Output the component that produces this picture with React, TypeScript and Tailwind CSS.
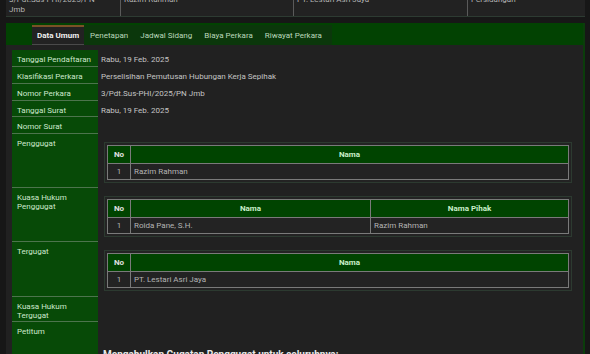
import React from "react";

type Col = { title: string; w?: string };

function MiniTable({ cols, row }: { cols: Col[]; row: string[] }) {
  return (
    <div className="ml-[6px] mr-[11px] border border-[#2c3a30] bg-[#232323] p-[2px]">
      <div className="border border-[#7a7a7a]">
        <div className="flex h-[17px] bg-[#004400] font-bold">
          <div className="w-[23px] shrink-0 border-r border-[#7a7a7a] flex items-center justify-center text-[#e0e0e0]">
            No
          </div>
          {cols.map((c, i) => (
            <div
              key={i}
              className={`${c.w ?? "flex-1"} flex items-center justify-center text-[#c9efc9] ${
                i < cols.length - 1 ? "border-r border-[#7a7a7a]" : ""
              }`}
            >
              {c.title}
            </div>
          ))}
        </div>
        <div className="flex h-[16px] border-t border-[#7a7a7a] text-[#b4b4b4]">
          <div className="w-[23px] shrink-0 border-r border-[#7a7a7a] flex items-center justify-center">
            1
          </div>
          {row.map((v, i) => (
            <div
              key={i}
              className={`${cols[i].w ?? "flex-1"} flex items-center pl-[3px] ${
                i < row.length - 1 ? "border-r border-[#7a7a7a]" : ""
              }`}
            >
              {v}
            </div>
          ))}
        </div>
      </div>
    </div>
  );
}

type Row = {
  label: React.ReactNode;
  h: string;
  value?: React.ReactNode;
  table?: React.ReactNode;
};

export default function App() {
  const rows: Row[] = [
    { label: "Tanggal Pendaftaran", h: "h-[17px]", value: "Rabu, 19 Feb. 2025" },
    { label: "Klasifikasi Perkara", h: "h-[17px]", value: "Perselisihan Pemutusan Hubungan Kerja Sepihak" },
    { label: "Nomor Perkara", h: "h-[17px]", value: "3/Pdt.Sus-PHI/2025/PN Jmb" },
    { label: "Tanggal Surat", h: "h-[16px]", value: "Rabu, 19 Feb. 2025" },
    { label: "Nomor Surat", h: "h-[17px]", value: "" },
    {
      label: "Penggugat",
      h: "h-[54px]",
      table: <MiniTable cols={[{ title: "Nama" }]} row={["Razim Rahman"]} />,
    },
    {
      label: (
        <>
          Kuasa Hukum
          <br />
          Penggugat
        </>
      ),
      h: "h-[54px]",
      table: (
        <MiniTable
          cols={[{ title: "Nama", w: "w-[240px]" }, { title: "Nama Pihak" }]}
          row={["Roida Pane, S.H.", "Razim Rahman"]}
        />
      ),
    },
    {
      label: "Tergugat",
      h: "h-[55px]",
      table: <MiniTable cols={[{ title: "Nama" }]} row={["PT. Lestari Asri Jaya"]} />,
    },
    {
      label: (
        <>
          Kuasa Hukum
          <br />
          Tergugat
        </>
      ),
      h: "h-[25px]",
      value: "",
    },
  ];

  return (
    <div className="w-[590px] h-[354px] overflow-hidden bg-[#171717] font-['Roboto',sans-serif] text-[8px] leading-[9px]">
      {/* top row of previous table */}
      <div className="ml-[6px] w-[579px] h-[17px] flex bg-[#222222] border-b border-[#2d3b32] overflow-hidden text-[#b5b5b5] leading-[10px]">
        <div className="w-[115px] shrink-0 border-r border-[#5a5a5a] flex items-end pl-[3px] pb-[1px]">
          <div>
            3/Pdt.Sus-PHI/2025/PN
            <br />
            Jmb
          </div>
        </div>
        <div className="w-[173px] shrink-0 border-r border-[#5a5a5a] pl-[3px]">
          <div className="-mt-[5px]">Razim Rahman</div>
        </div>
        <div className="w-[174px] shrink-0 border-r border-[#5a5a5a] pl-[3px]">
          <div className="-mt-[5px]">PT. Lestari Asri Jaya</div>
        </div>
        <div className="flex-1 pl-[3px]">
          <div className="-mt-[5px]">Persidangan</div>
        </div>
      </div>

      {/* panel */}
      <div className="ml-[6px] mt-[6px] w-[579px] h-[400px] bg-[#212121] border-r-2 border-[#0b3d0b]">
        {/* tab bar */}
        <div className="h-[22px] bg-[#024202] flex items-end pl-[26px]">
          <div className="h-[20px] flex bg-[#0b370b]">
            <div className="h-[20px] px-[5px] flex items-center bg-[#222222] border-t-2 border-[#7a5126] border-b border-b-[#4a4a4a] font-bold text-[#f0f0f0]">
              Data Umum
            </div>
            {["Penetapan", "Jadwal Sidang", "Biaya Perkara", "Riwayat Perkara"].map((t) => (
              <div key={t} className="px-[6px] flex items-center text-[#bcd8bc]">
                {t}
              </div>
            ))}
            <div className="w-[4px]" />
          </div>
        </div>

        {/* content */}
        <div className="pl-[6px] pt-[5px]">
          {rows.map((r, i) => (
            <div key={i} className={`flex ${r.h}`}>
              <div className="w-[86px] shrink-0 bg-[#074a07] border-b border-[#4d744d] px-[5px] pt-[5px] text-[#cde8cd]">
                {r.label}
              </div>
              <div className="flex-1 text-[#c4c4c4]">
                {r.table ? (
                  <div className="pt-[8px]">{r.table}</div>
                ) : (
                  <div className="pl-[3px] pt-[5px]">{r.value}</div>
                )}
              </div>
            </div>
          ))}
          <div className="flex h-[60px]">
            <div className="w-[86px] shrink-0 bg-[#074a07] px-[5px] pt-[5px] text-[#cde8cd]">Petitum</div>
            <div className="flex-1 pl-[5px] pt-[27px] text-[10px] leading-[12px] font-bold text-[#e8e8e8]">
              Mengabulkan Gugatan Penggugat untuk seluruhnya;
            </div>
          </div>
        </div>
      </div>
    </div>
  );
}
